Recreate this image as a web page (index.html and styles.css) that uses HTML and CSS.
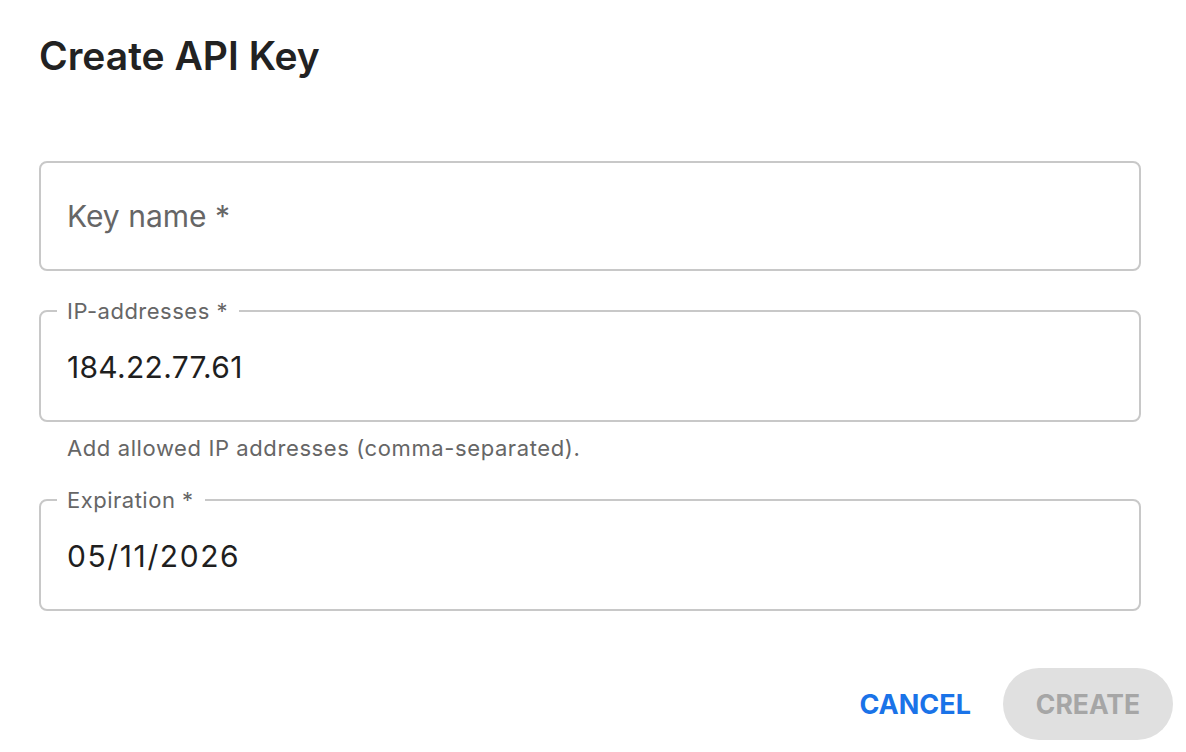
FILE: index.html
```html
<!DOCTYPE html>
<html lang="en">
<head>
<meta charset="utf-8">
<title>Create API Key</title>
<link rel="stylesheet" href="styles.css">
</head>
<body>
<div class="dialog">
  <h1 class="dialog-title">Create API Key</h1>
  <div class="dialog-content">
    <fieldset class="field field-empty">
      <span class="placeholder">Key name *</span>
    </fieldset>
    <fieldset class="field field-filled">
      <legend class="field-label">IP-addresses *</legend>
      <span class="value">184.22.77.61</span>
    </fieldset>
    <p class="helper">Add allowed IP addresses (comma-separated).</p>
    <fieldset class="field field-filled field-last">
      <legend class="field-label">Expiration *</legend>
      <span class="value value-date">05/11/2026</span>
    </fieldset>
  </div>
  <div class="dialog-actions">
    <button class="btn btn-text">CANCEL</button>
    <button class="btn btn-disabled" disabled>CREATE</button>
  </div>
</div>
</body>
</html>
```
FILE: styles.css
```css
* { box-sizing: border-box; }
html, body {
  margin: 0;
  padding: 0;
  background: #ffffff;
}
body {
  font-family: Inter, "Noto Sans", sans-serif;
  color: #222222;
}
.dialog {
  width: 1186px;
  height: 752px;
  display: flex;
  flex-direction: column;
}
.dialog-title {
  margin: 0;
  padding: 32px 39px 0 39px;
  font-size: 39px;
  line-height: 48px;
  font-weight: 600;
  color: #222222;
  letter-spacing: 0;
}
.dialog-content {
  padding: 81px 45px 0 39px;
  display: flex;
  flex-direction: column;
}
.field {
  margin: 0;
  border: 2px solid #c8c8c8;
  border-radius: 8px;
  padding: 0 26px;
  min-width: 0;
}
.field-empty {
  height: 110px;
  padding-top: 33px;
}
.field-filled {
  margin-top: 28px;
  padding-top: 24px;
  padding-bottom: 33px;
}
.field-last {
  margin-top: 28px;
}
.field-label {
  margin-left: -10px;
  padding: 0 11px 0 10px;
  font-size: 22px;
  line-height: 24px;
  letter-spacing: 0.5px;
  color: #666666;
}
.placeholder {
  display: block;
  font-size: 30px;
  line-height: 40px;
  color: #666666;
}
.value {
  display: block;
  font-size: 30px;
  line-height: 40px;
  letter-spacing: 0.3px;
  color: #1f1f1f;
}
.value-date {
  letter-spacing: 1.6px;
}
.helper {
  margin: 14px 0 0 0;
  padding-left: 28px;
  font-size: 22px;
  line-height: 24px;
  letter-spacing: 0.6px;
  color: #666666;
}
.dialog-actions {
  margin-top: 57px;
  padding: 0 13px 0 39px;
  display: flex;
  justify-content: flex-end;
  gap: 13px;
}
.btn {
  font-family: Inter, "Noto Sans", sans-serif;
  font-size: 26.5px;
  font-weight: 700;
  height: 72px;
  border: none;
  border-radius: 36px;
  padding: 0 32px;
  background: transparent;
  cursor: pointer;
}
.btn-text {
  color: #1a73e8;
  padding: 0 19px 0 21px;
  font-size: 27px;
}
.btn-disabled {
  background: #e0e0e0;
  color: #a6a6a6;
  width: 170px;
  cursor: default;
}
```
